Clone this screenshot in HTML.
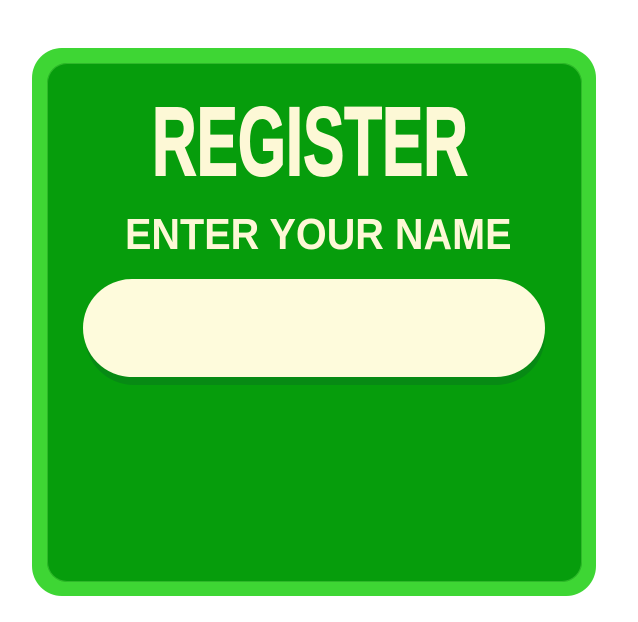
<!DOCTYPE html>
<html><head><style>
html,body{margin:0;padding:0;background:#fff;width:638px;height:622px;overflow:hidden;font-family:"Liberation Sans",sans-serif}
.outer{position:absolute;left:32px;top:48px;width:564px;height:548px;background:#3ed634;border-radius:30px}
.inner{position:absolute;left:47px;top:63px;width:535px;height:519px;background:#069d0c;border-radius:20px;box-shadow:inset 0 0 0 1px #2fb82a}
.t1{position:absolute;left:152px;top:92px;width:314px;height:100px;}
.t1 span{position:absolute;left:0;top:0;font-family:"Liberation Sans Narrow","Liberation Sans",sans-serif;font-weight:bold;font-size:97px;line-height:100px;color:#fdf8d6;transform-origin:0 0;transform:scaleX(0.637);white-space:nowrap;-webkit-text-stroke:2px #fdf8d6}
.t2{position:absolute;left:125px;top:210px;height:50px;}
.t2 span{position:absolute;left:0;top:0;font-weight:bold;font-size:44px;line-height:50px;color:#fdf8d6;transform-origin:0 0;transform:scaleX(0.90);white-space:nowrap}
.shadow{position:absolute;left:85px;top:287px;width:460px;height:98px;background:#078a14;border-radius:49px}
.input{position:absolute;left:83px;top:279px;width:462px;height:98px;background:#fefbdc;border-radius:49px}
</style></head><body>
<div class="outer"></div>
<div class="inner"></div>
<div class="t1"><span>REGISTER</span></div>
<div class="t2"><span>ENTER YOUR NAME</span></div>
<div class="shadow"></div>
<div class="input"></div>
</body></html>
